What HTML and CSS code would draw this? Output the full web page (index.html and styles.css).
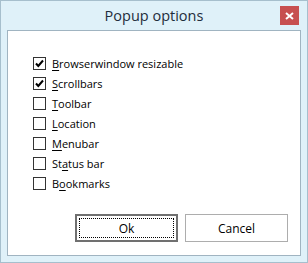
FILE: index.html
```html
<!DOCTYPE html>
<html>
<head>
<meta charset="utf-8">
<link rel="stylesheet" href="styles.css">
</head>
<body>
<div class="window">
  <div class="titlebar">
    <div class="title">Popup options</div>
    <div class="close">
      <svg width="9" height="8" viewBox="0 0 9 8"><path d="M1 1 L8 7 M8 1 L1 7" stroke="#fff" stroke-width="2"/></svg>
    </div>
  </div>
  <div class="panel">
    <div class="options">
      <div class="row"><span class="box checked"><svg width="11" height="11" viewBox="0 0 11 11"><path d="M2 5.5 L4.3 8 L9 2.5" fill="none" stroke="#000" stroke-width="2"/></svg></span><span class="label"><u>B</u>rowserwindow resizable</span></div>
      <div class="row"><span class="box checked"><svg width="11" height="11" viewBox="0 0 11 11"><path d="M2 5.5 L4.3 8 L9 2.5" fill="none" stroke="#000" stroke-width="2"/></svg></span><span class="label"><u>S</u>crollbars</span></div>
      <div class="row"><span class="box"></span><span class="label"><u>T</u>oolbar</span></div>
      <div class="row"><span class="box"></span><span class="label"><u>L</u>ocation</span></div>
      <div class="row"><span class="box"></span><span class="label"><u>M</u>enubar</span></div>
      <div class="row"><span class="box"></span><span class="label">St<u>a</u>tus bar</span></div>
      <div class="row"><span class="box"></span><span class="label">B<u>o</u>okmarks</span></div>
    </div>
    <div class="buttons">
      <button class="btn default"><span class="focus">Ok</span></button>
      <button class="btn">Cancel</button>
    </div>
  </div>
</div>
</body>
</html>
```
FILE: styles.css
```css
html, body {
  margin: 0;
  padding: 0;
  background: #fff;
}
.window {
  width: 308px;
  height: 263px;
  box-sizing: border-box;
  border: 1px solid #a6bfcd;
  background: #dff1f9;
  padding: 0 6px 6px 6px;
  display: flex;
  flex-direction: column;
  font-family: "Open Sans", "Noto Sans", sans-serif;
}
.titlebar {
  height: 29px;
  position: relative;
  display: flex;
  align-items: center;
  justify-content: center;
}
.title {
  font-size: 14.5px;
  color: #1e2d3c;
  margin-top: 0;
}
.close {
  position: absolute;
  right: 2px;
  top: 5px;
  width: 19px;
  height: 19px;
  background: #c75050;
  display: flex;
  align-items: center;
  justify-content: center;
}
.close svg { display: block; }
.panel {
  height: 226px;
  box-sizing: border-box;
  border: 1px solid #a0b4c1;
  background: #fff;
  display: flex;
  flex-direction: column;
  padding: 22px 12px 13px 25px;
}
.options {
  display: flex;
  flex-direction: column;
}
.row {
  height: 20px;
  display: flex;
  align-items: center;
  gap: 6px;
  font-size: 11px;
  color: #000;
}
.box {
  width: 13px;
  height: 13px;
  box-sizing: border-box;
  border: 1px solid #333;
  background: #fff;
  display: flex;
  align-items: center;
  justify-content: center;
}
.box svg { display: block; }
.label u { text-decoration-thickness: 1px; text-underline-offset: 2px; }
.buttons {
  margin-top: auto;
  display: flex;
  justify-content: flex-end;
  gap: 7px;
}
.btn {
  width: 103px;
  height: 28px;
  box-sizing: border-box;
  border: 1px solid #adadad;
  background: #fff;
  font-family: "Open Sans", "Noto Sans", sans-serif;
  font-size: 12px;
  color: #000;
  padding: 0;
  display: flex;
  align-items: center;
  justify-content: center;
}
.btn.default {
  border: 2px solid #707070;
  padding: 2px;
}
.focus {
  flex: 1;
  align-self: stretch;
  border: 1px dotted #000;
  display: flex;
  align-items: center;
  justify-content: center;
}
```
